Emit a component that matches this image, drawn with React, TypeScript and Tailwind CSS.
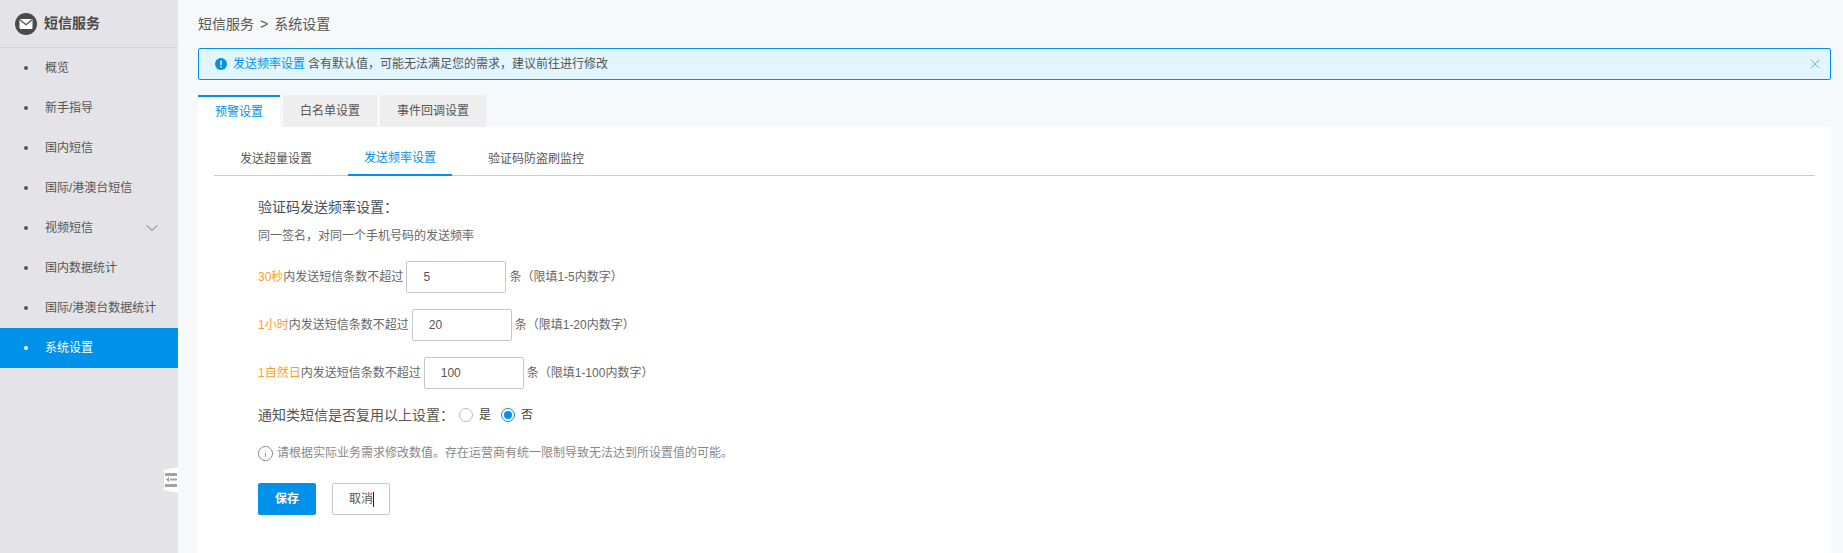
import React from 'react';
import { ChevronDown, Info, X } from 'lucide-react';

const menu = ['概览', '新手指导', '国内短信', '国际/港澳台短信', '视频短信', '国内数据统计', '国际/港澳台数据统计', '系统设置'];

const rows = [
  { key: '30秒', value: '5', hint: '条（限填1-5内数字）' },
  { key: '1小时', value: '20', hint: '条（限填1-20内数字）' },
  { key: '1自然日', value: '100', hint: '条（限填1-100内数字）' },
];

const Sidebar: React.FC = () => (
  <aside className="relative w-[178px] shrink-0 bg-[#e4e4e8]">
    <div className="flex h-[48px] items-center gap-[7px] border-b border-[#d5d5d9] pl-[15px]">
      <svg width="22" height="22" viewBox="0 0 22 22">
        <circle cx="11" cy="11" r="11" fill="#4a4a4a" />
        <rect x="4.5" y="6" width="13" height="10" rx="1.2" fill="#fff" />
        <path d="M5 6.8 L11 11.8 L17 6.8" fill="none" stroke="#4a4a4a" strokeWidth="1.2" />
      </svg>
      <span className="text-[14px] font-bold text-[#4a4a4a]">短信服务</span>
    </div>
    <ul>
      {menu.map((item) => {
        const active = item === '系统设置';
        return (
          <li
            key={item}
            className={
              active
                ? 'flex h-[40px] items-center bg-[#0091ea] pl-[24px] text-[12px] text-white'
                : 'flex h-[40px] items-center pl-[24px] text-[12px] text-[#555]'
            }
          >
            <span className={active ? 'mr-[17px] h-[4px] w-[4px] rounded-full bg-white' : 'mr-[17px] h-[4px] w-[4px] rounded-full bg-[#555]'} />
            <span>{item}</span>
            {item === '视频短信' && <ChevronDown className="ml-auto mr-[16px] text-[#555]" size={20} strokeWidth={1} />}
          </li>
        );
      })}
    </ul>
    {/* collapse handle */}
    <div className="absolute left-[164px] top-[467px] h-[26px] w-[14px] bg-white [clip-path:polygon(0_3px,100%_0,100%_100%,0_23px)]">
      <svg width="14" height="26" viewBox="0 0 14 26">
        <rect x="1" y="6" width="12" height="3" fill="#a3a3a3" />
        <path d="M2 12.5 L5 10 V15 Z" fill="#8aa0b0" />
        <rect x="6" y="11.5" width="7" height="2" fill="#a3a3a3" />
        <rect x="1" y="17" width="12" height="3" fill="#a3a3a3" />
      </svg>
    </div>
  </aside>
);

const TopTabs: React.FC = () => (
  <div className="mt-[15px] flex h-[32px] gap-[3px] text-[12px]">
    <div className="flex w-[82px] items-center justify-center border-t-2 border-[#0091ea] bg-white text-[#0091ea]">预警设置</div>
    <div className="flex w-[94px] items-center justify-center bg-[#eeeeee] text-[#555]">白名单设置</div>
    <div className="flex w-[106px] items-center justify-center bg-[#eeeeee] text-[#555]">事件回调设置</div>
  </div>
);

const SubTabs: React.FC = () => (
  <div className="mx-[16px] flex h-[34px] gap-[20px] border-b border-[#cccccc] pl-[10px] text-[12px]">
    <div className="flex h-[34px] items-center px-[16px] text-[#555]">发送超量设置</div>
    <div className="flex h-[34px] items-center border-b-2 border-[#0091ea] px-[16px] text-[#0091ea]">发送频率设置</div>
    <div className="flex h-[34px] items-center px-[16px] text-[#555]">验证码防盗刷监控</div>
  </div>
);

const Radio: React.FC<{ checked?: boolean; label: string }> = ({ checked, label }) => (
  <label className="flex items-center gap-[6px] text-[12px] text-[#444]">
    {checked ? (
      <span className="flex h-[14px] w-[14px] items-center justify-center rounded-full border border-[#0091ea]">
        <span className="h-[8px] w-[8px] rounded-full bg-[#0091ea]" />
      </span>
    ) : (
      <span className="h-[14px] w-[14px] rounded-full border border-[#bbbbbb]" />
    )}
    {label}
  </label>
);

export default function App() {
  return (
    <div className="flex h-[553px] overflow-hidden bg-[#f7f8fa] font-['Liberation_Sans','Noto_Sans_CJK_SC',sans-serif]">
      <Sidebar />
      <main className="ml-[20px] flex w-[1633px] flex-col">
        <div className="flex h-[48px] items-center text-[14px] text-[#555]">
          短信服务<span className="mx-[6px]">&gt;</span>系统设置
        </div>

        <div className="flex h-[32px] items-center rounded-[2px] border border-[#0091ea] bg-[#e1f6ff] pl-[16px] pr-[7px] text-[12px] text-[#555]">
          <svg width="12" height="12" viewBox="0 0 12 12" className="mr-[6px]">
            <circle cx="6" cy="6" r="6" fill="#0091ea" />
            <rect x="5.3" y="2.5" width="1.4" height="4.5" fill="#fff" />
            <rect x="5.3" y="8" width="1.4" height="1.4" fill="#fff" />
          </svg>
          <span className="text-[#0091ea]">发送频率设置</span>
          <span className="ml-[3px]">含有默认值，可能无法满足您的需求，建议前往进行修改</span>
          <X className="ml-auto text-[#3aa8f0]" size={16} strokeWidth={1.2} />
        </div>

        <TopTabs />

        <section className="flex-1 bg-white pt-[15px]">
          <SubTabs />

          <div className="pl-[60px] text-[12px] text-[#666]">
            <h3 className="mt-[21px] h-[20px] text-[14px] leading-[20px] text-[#44505e]">验证码发送频率设置：</h3>
            <p className="mt-[9px] h-[20px] leading-[20px]">同一签名，对同一个手机号码的发送频率</p>

            <div className="mt-[15px] flex flex-col gap-[16px]">
              {rows.map((row) => (
                <div key={row.key} className="flex h-[32px] items-center">
                  <span className="text-[#ff9e1b]">{row.key}</span>
                  <span>内发送短信条数不超过</span>
                  <div className="ml-[3px] flex h-[32px] w-[100px] items-center rounded-[2px] border border-[#c8c8c8] pl-[16px] text-[12px] text-[#555]">
                    {row.value}
                  </div>
                  <span className="ml-[3px]">{row.hint}</span>
                </div>
              ))}
            </div>

            <div className="mt-[16px] flex h-[20px] items-center text-[14px] text-[#555]">
              <span>通知类短信是否复用以上设置：</span>
              <div className="ml-[5px] flex gap-[10px]">
                <Radio label="是" />
                <Radio checked label="否" />
              </div>
            </div>

            <div className="mt-[18px] flex h-[20px] items-center text-[12px] text-[#888]">
              <Info size={17} strokeWidth={1.2} className="-ml-px mr-[3px] text-[#777]" />
              请根据实际业务需求修改数值。存在运营商有统一限制导致无法达到所设置值的可能。
            </div>

            <div className="mt-[20px] flex gap-[16px] text-[12px]">
              <button className="h-[32px] w-[58px] rounded-[2px] bg-[#0091ea] font-bold text-white">保存</button>
              <button className="relative h-[32px] w-[58px] rounded-[2px] border border-[#c8c8c8] text-[#555]">
                取消
                <span className="absolute left-[40px] top-[8px] h-[15px] w-px bg-[#222]" />
              </button>
            </div>
          </div>
        </section>
      </main>
    </div>
  );
}
